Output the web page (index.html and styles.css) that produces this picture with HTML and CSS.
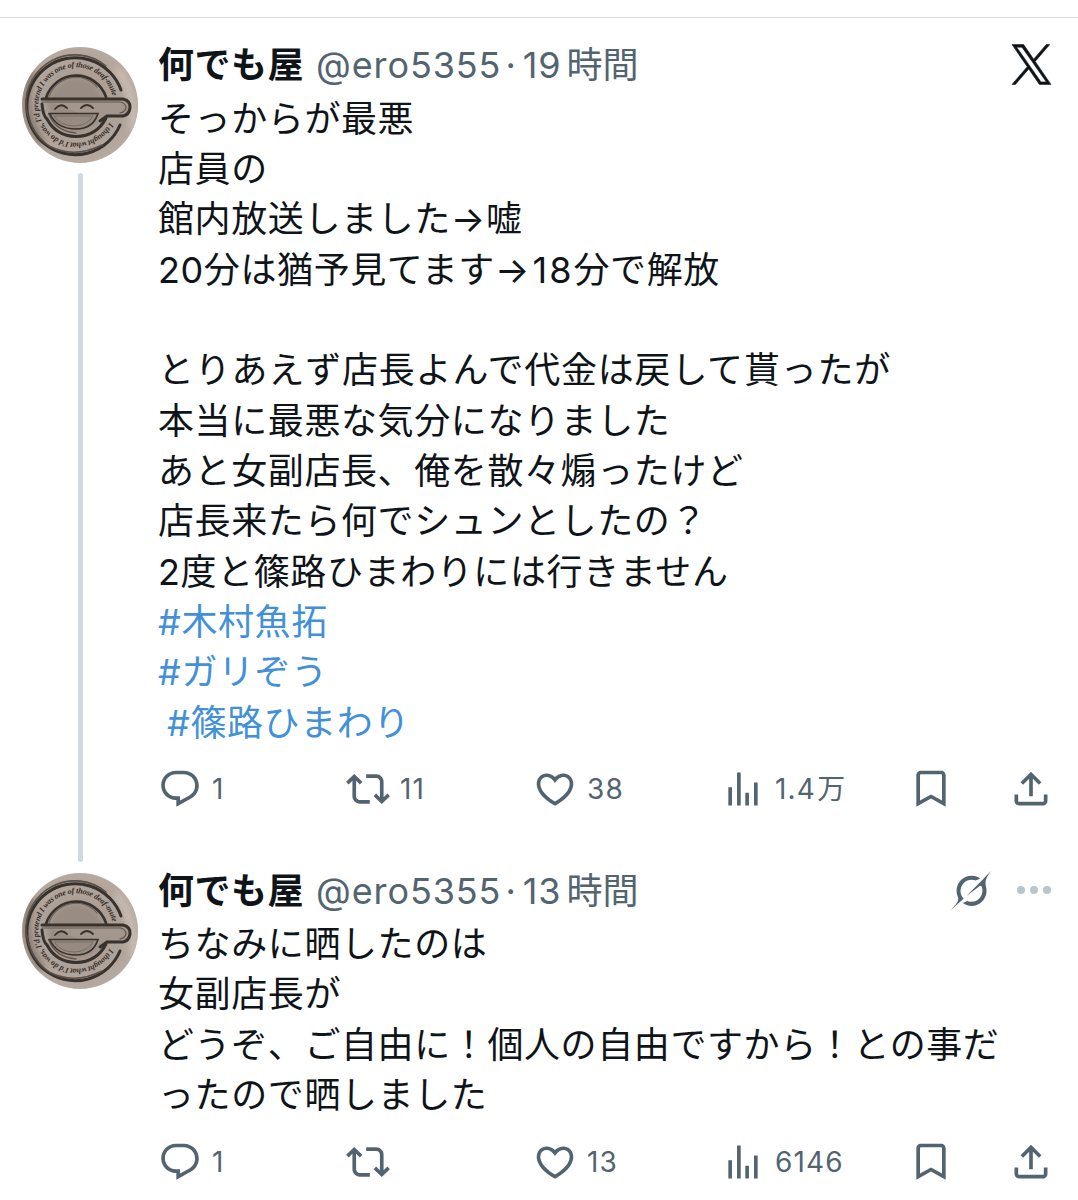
FILE: index.html
```html
<!DOCTYPE html>
<html lang="ja">
<head>
<meta charset="utf-8">
<title>スレッド</title>
<link rel="stylesheet" href="styles.css">
</head>
<body>
<svg class="defs" width="0" height="0" aria-hidden="true">
  <defs>
    <radialGradient id="paper" cx="50%" cy="50%" r="55%">
      <stop offset="0" stop-color="#a99b90"/>
      <stop offset=".65" stop-color="#afa298"/>
      <stop offset="1" stop-color="#b9aca2"/>
    </radialGradient>
    <filter id="smudge" x="-10%" y="-10%" width="120%" height="120%"><feGaussianBlur stdDeviation=".6"/></filter>
    <filter id="shade" x="-30%" y="-30%" width="160%" height="160%"><feGaussianBlur stdDeviation="3"/></filter>
    <clipPath id="disc"><circle cx="58" cy="58" r="58"/></clipPath>
  </defs>
  <symbol id="avatar" viewBox="0 0 116 116">
    <g clip-path="url(#disc)">
      <rect width="116" height="116" fill="url(#paper)"/>
      <g filter="url(#shade)" fill="none">
        <path d="M10 24Q-4 64 20 96" stroke="#857870" stroke-width="8"/>
        <path d="M94 22Q112 40 112 84" stroke="#c8bcb3" stroke-width="8"/>
        <circle cx="54" cy="58" r="28" fill="#998c82"/>
      </g>
      <g filter="url(#smudge)" fill="none" stroke="#38312d" stroke-linecap="round">
        <path d="M99 43A48.500 48.500 0 1 0 98 78" stroke-width="3"/>
        <path d="M84 19A49 49 0 0 0 4 60Q8 86 27 99Q52 112 80 98" stroke="#5a5049" stroke-width="1.600"/>
        <path d="M24 51A31.500 31.500 0 0 1 84 50" stroke-width="2.600"/>
        <path d="M27 50A28 28 0 0 1 75 40" stroke="#6e625a" stroke-width="1.200"/>
        <path d="M20 57Q21 69 25 72Q34 89 54 89.500Q75 89 84 71" stroke-width="3"/>
        <path d="M27 67Q33 84 54 86" stroke="#62564f" stroke-width="1.400"/>
        <path d="M20 52H101Q109 54 108 61Q107 68 101 69H85L78 74" fill="#a3968c" stroke-width="3"/>
        <path d="M20 55H99Q104 57 104 61Q103 65 98 66" stroke="#62564f" stroke-width="1.200"/>
        <path d="M33 62Q39 55 45 61M59 61Q65 55 71 61" stroke-width="1.800"/>
        <path d="M27 66.500H76Q71 82 54 82Q35 82 28 67" fill="#978a80" stroke-width="1.600"/>
        <path d="M32 69H71Q66 78 53 79Q39 79 33 70" stroke="#756960" stroke-width=".9"/>
      </g>
      <path id="ring" d="M87.400 75.500A37.700 37.700 0 1 1 90.300 48" fill="none"/>
      <text class="avatar-text"><textPath href="#ring">I thought what I'd do was, I'd pretend I was one of those deaf-mutes</textPath></text>
    </g>
  </symbol>
  <symbol id="reply" viewBox="0 0 24 24"><path d="M1.751 10c0-4.42 3.584-8 8.005-8h4.366c4.49 0 8.129 3.64 8.129 8.13 0 2.96-1.607 5.68-4.196 7.11l-8.054 4.46v-3.69h-.067c-4.49.1-8.183-3.51-8.183-8.01zm8.005-6c-3.317 0-6.005 2.69-6.005 6 0 3.37 2.77 6.08 6.138 6.01l.351-.01h1.761v2.3l5.087-2.81c1.951-1.08 3.163-3.13 3.163-5.36 0-3.39-2.744-6.13-6.129-6.13H9.756z"/></symbol>
  <symbol id="repost" viewBox="0 0 24 24"><path d="M4.5 3.88l4.432 4.14-1.364 1.46L5.5 7.55V16c0 1.1.896 2 2 2H13v2H7.5c-2.209 0-4-1.79-4-4V7.55L1.432 9.48.068 8.02 4.5 3.88zM16.5 6H11V4h5.5c2.209 0 4 1.79 4 4v8.45l2.068-1.93 1.364 1.46-4.432 4.14-4.432-4.14 1.364-1.46 2.068 1.93V8c0-1.1-.896-2-2-2z"/></symbol>
  <symbol id="heart" viewBox="0 0 24 24"><path d="M16.697 5.5c-1.222-.06-2.679.51-3.89 2.16l-.805 1.09-.806-1.09C9.984 6.01 8.526 5.44 7.304 5.5c-1.243.07-2.349.78-2.91 1.91-.552 1.12-.633 2.78.479 4.82 1.074 1.97 3.257 4.27 7.129 6.61 3.87-2.34 6.052-4.64 7.126-6.61 1.111-2.04 1.03-3.7.477-4.82-.561-1.13-1.666-1.84-2.908-1.91zm4.187 7.69c-1.351 2.48-4.001 5.12-8.379 7.67l-.503.3-.504-.3c-4.379-2.55-7.029-5.19-8.382-7.67-1.36-2.5-1.41-4.86-.514-6.67.887-1.79 2.647-2.91 4.601-3.01 1.651-.09 3.368.56 4.798 2.01 1.429-1.45 3.146-2.1 4.796-2.01 1.954.1 3.714 1.22 4.601 3.01.896 1.81.846 4.17-.514 6.67z"/></symbol>
  <symbol id="views" viewBox="0 0 24 24"><path d="M8.75 21V3h2v18h-2zM18 21V8.5h2V21h-2zM4 21l.004-10h2L6 21H4zm9.248 0v-7h2v7h-2z"/></symbol>
  <symbol id="bookmark" viewBox="0 0 24 24"><path d="M4 4.5C4 3.12 5.119 2 6.5 2h11C18.881 2 20 3.12 20 4.5v17.2l-8-4.470-8 4.470V4.500zM6.500 4c-.276 0-.5.220-.5.500v13.800l6-3.350 6 3.350V4.500c0-.280-.224-.5-.5-.5h-11z"/></symbol>
  <symbol id="share" viewBox="0 0 24 24"><path d="M12 2.59l5.7 5.7-1.41 1.42L13 6.41V16h-2V6.41l-3.3 3.3-1.41-1.42L12 2.59zM21 15l-.02 3.51c0 1.38-1.12 2.49-2.5 2.49H5.5C4.11 21 3 19.88 3 18.5V15h2v3.5c0 .28.22.5.5.5h12.98c.28 0 .5-.22.5-.5L19 15h2z"/></symbol>
</svg>

<main class="thread">
  <article class="post">
    <div class="rail">
      <svg class="avatar"><use href="#avatar"/></svg>
      <div class="connector"></div>
    </div>
    <div class="content">
      <header class="head">
        <div class="who"><b class="name">何でも屋</b><span class="meta">@ero5355<span class="dot">·</span>19<span class="unit">時間</span></span></div>
        <svg class="x-logo" viewBox="0 0 1200 1227"><path d="M714.163 519.284L1160.89 0H1055.03L667.137 450.887L357.328 0H0L468.492 681.821L0 1226.37H105.866L515.491 750.218L842.672 1226.37H1200L714.137 519.284H714.163ZM569.165 687.828L521.697 619.934L144.011 79.6944H306.615L611.412 515.685L658.88 583.579L1055.08 1150.3H892.476L569.165 687.854V687.828Z"/></svg>
      </header>
      <div class="text">
        <p>そっからが最悪</p>
        <p>店員の</p>
        <p>館内放送しました<span class="arrow">→</span>嘘</p>
        <p>20分は猶予見てます<span class="arrow">→</span><span class="number">18</span>分で解放</p>
        <p><br></p>
        <p class="loose">とりあえず店長よんで代金は戻して貰ったが</p>
        <p>本当に最悪な気分になりました</p>
        <p>あと女副店長、俺を散々煽ったけど</p>
        <p>店長来たら何でシュンとしたの？</p>
        <p>2度と篠路ひまわりには行きません</p>
        <p><a class="tag">#木村魚拓</a></p>
        <p><a class="tag">#ガリぞう</a></p>
        <p><a class="tag spaced">#篠路ひまわり</a></p>
      </div>
      <footer class="actions">
        <span class="action"><svg><use href="#reply"/></svg>1</span>
        <span class="action"><svg><use href="#repost"/></svg>11</span>
        <span class="action"><svg><use href="#heart"/></svg>38</span>
        <span class="action"><svg><use href="#views"/></svg><span>1.4<span class="unit">万</span></span></span>
        <span class="action"><svg><use href="#bookmark"/></svg></span>
        <span class="action"><svg><use href="#share"/></svg></span>
      </footer>
    </div>
  </article>

  <article class="post">
    <div class="rail">
      <svg class="avatar"><use href="#avatar"/></svg>
    </div>
    <div class="content">
      <header class="head">
        <div class="who"><b class="name">何でも屋</b><span class="meta">@ero5355<span class="dot">·</span>13<span class="unit">時間</span></span></div>
        <div class="tools">
          <svg class="grok" viewBox="0 0 33 32"><path d="M12.745 20.54l10.97-8.19c.539-.4 1.307-.244 1.564.38 1.349 3.288.746 7.241-1.938 9.955-2.683 2.714-6.417 3.31-9.83 1.954l-3.728 1.745c5.347 3.697 11.84 2.782 15.898-1.324 3.219-3.255 4.216-7.692 3.284-11.693l.008.009c-1.351-5.878.332-8.227 3.782-13.031L33 0l-4.54 4.59v-.014L12.743 20.544m-2.263 1.987c-3.837-3.707-3.175-9.446.1-12.755 2.42-2.449 6.388-3.448 9.852-1.979l3.72-1.737c-.67-.49-1.53-1.017-2.515-1.387-4.455-1.854-9.789-.931-13.41 2.728-3.483 3.523-4.579 8.94-2.697 13.561 1.405 3.454-.899 5.898-3.22 8.364C1.498 30.2.674 31.073 0 32l10.478-9.466"/></svg>
          <svg class="more" viewBox="0 0 34 8"><circle cx="4" cy="4" r="4"/><circle cx="17" cy="4" r="4"/><circle cx="30" cy="4" r="4"/></svg>
        </div>
      </header>
      <div class="text">
        <p>ちなみに晒したのは</p>
        <p>女副店長が</p>
        <p>どうぞ、ご自由に！個人の自由ですから！との事だったので晒しました</p>
      </div>
      <footer class="actions">
        <span class="action"><svg><use href="#reply"/></svg>1</span>
        <span class="action"><svg><use href="#repost"/></svg></span>
        <span class="action"><svg><use href="#heart"/></svg>13</span>
        <span class="action"><svg><use href="#views"/></svg>6146</span>
        <span class="action"><svg><use href="#bookmark"/></svg></span>
        <span class="action"><svg><use href="#share"/></svg></span>
      </footer>
    </div>
  </article>
</main>
</body>
</html>
```
FILE: styles.css
```css
* { box-sizing: border-box; }

body {
  margin: 0;
  background: #fff;
  color: #0f1419;
  font-family: Inter, "Noto Sans CJK JP", sans-serif;
  font-size: 36px;
}

.defs { position: absolute; }

.thread {
  margin-top: 17px;
  height: 1183px;
  overflow: hidden;
  border-top: 1px solid #dcdfe1;
  padding: 29px 26px 0 22px;
}

.post {
  display: flex;
  gap: 20px;
}

.rail {
  width: 116px;
  flex: none;
  display: flex;
  flex-direction: column;
  align-items: center;
  gap: 10px;
}

.avatar {
  display: block;
  width: 116px;
  height: 116px;
  flex: none;
}

.avatar-text {
  fill: #332c28;
  font-family: "Liberation Serif", serif;
  font-size: 8px;
  font-style: italic;
  font-weight: 700;
  letter-spacing: -.2px;
}

.connector {
  width: 5px;
  flex: 1;
  margin-bottom: 11px;
  border-radius: 3px;
  background: #cfd9de;
}

.content {
  flex: 1;
  min-width: 0;
}

.post:first-child .content { height: 825.5px; }

.head {
  display: flex;
  justify-content: space-between;
  align-items: center;
  height: 35px;
  white-space: nowrap;
}

.who {
  display: flex;
  align-items: baseline;
  gap: 12px;
  padding-top: 2px;
  line-height: 35px;
}

.name { letter-spacing: .5px; }
.meta { color: #536471; letter-spacing: .9px; }
.dot { margin: 0 6px 0 4px; }
.unit { margin-left: 5px; letter-spacing: 0; }

.x-logo {
  width: 39px;
  height: 41px;
  margin-right: 1px;
  overflow: visible;
  fill: #0f1419;
  stroke: #0f1419;
  stroke-width: 18px;
}

.tools {
  display: flex;
  align-items: center;
  gap: 26px;
  margin-right: 1px;
}

.grok { width: 40px; height: 39px; fill: #536471; }
.more { width: 34px; height: 8px; fill: #b9c5cd; }

.text {
  margin-top: 11.5px;
  letter-spacing: .6px;
  line-height: 50.35px;
  line-break: anywhere;
}

.text p {
  margin: 0;
  width: 860px;
}

.text .loose { letter-spacing: .8px; }
.arrow { letter-spacing: .8px; }
.number { letter-spacing: 2px; margin-left: 2.5px; }

.tag { color: #4291d8; }
.spaced { margin-left: 9px; }

.actions {
  display: grid;
  grid-template-columns: 188px 187px 188px 188px 99.5px 44px;
  align-items: center;
  height: 44px;
  margin-top: 19.5px;
  color: #536471;
  font-size: 28px;
  letter-spacing: 1.1px;
}

.action {
  display: flex;
  align-items: center;
  gap: 10px;
  line-height: 44px;
}

.action .unit { margin-left: 1.5px; }

.action svg {
  width: 44px;
  height: 44px;
  flex: none;
  fill: #536471;
}
```
